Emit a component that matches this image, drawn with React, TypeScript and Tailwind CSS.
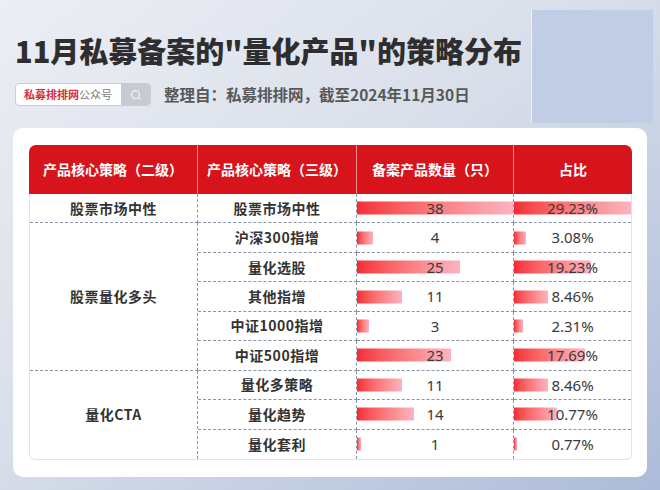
import React from "react";
import { Search } from "lucide-react";

type Item = { name: string; count: number; pct: number };
type Group = { group: string; items: Item[] };

const groups: Group[] = [
  { group: "股票市场中性", items: [{ name: "股票市场中性", count: 38, pct: 29.23 }] },
  {
    group: "股票量化多头",
    items: [
      { name: "沪深300指增", count: 4, pct: 3.08 },
      { name: "量化选股", count: 25, pct: 19.23 },
      { name: "其他指增", count: 11, pct: 8.46 },
      { name: "中证1000指增", count: 3, pct: 2.31 },
      { name: "中证500指增", count: 23, pct: 17.69 },
    ],
  },
  {
    group: "量化CTA",
    items: [
      { name: "量化多策略", count: 11, pct: 8.46 },
      { name: "量化趋势", count: 14, pct: 10.77 },
      { name: "量化套利", count: 1, pct: 0.77 },
    ],
  },
];

const maxCount = 38;
const maxPct = 29.23;
const spanClass: Record<number, string> = { 1: "row-span-1", 3: "row-span-3", 5: "row-span-5" };

const cjk = "font-['Noto_Sans_CJK_SC',sans-serif]";
const num = "font-['Noto_Sans','Noto_Sans_CJK_SC',sans-serif]";

// bar sits behind the value, width taken from data
function BarCell({ ratio, label, last, edge }: { ratio: number; label: string; last: boolean; edge: boolean }) {
  return (
    <div
      className={`relative flex items-center justify-center border-dashed border-[#8b94a6] ${last ? "" : "border-b"} ${edge ? "" : "border-r"}`}
    >
      <div
        className="absolute left-0 top-1/2 h-[13px] -translate-y-1/2 bg-linear-to-r from-[#f42a37] to-[#fab4c1]"
        style={{ width: `${ratio * 100}%` }}
      />
      <span className={`relative text-[15px] text-[#3a3a3a] ${num}`}>{label}</span>
    </div>
  );
}

export default function App() {
  const total = groups.reduce((n, g) => n + g.items.length, 0);
  let idx = 0;

  return (
    <div className={`w-[660px] h-[490px] overflow-hidden bg-linear-to-br from-[#eceef4] via-[#d9dfea] via-45% to-[#adbbd9] ${cjk}`}>
      {/* Title area */}
      <div className="flex h-[128px]">
        <div className="min-w-0 flex-1 pl-[15px] pt-[32px]">
          <h1 className="text-[29px] leading-[36px] font-black text-[#2e2e30] whitespace-nowrap">
            11月私募备案的"量化产品"的策略分布
          </h1>
          <div className="mt-[15px] flex items-center">
            <div className="flex h-[23px] w-[136px] overflow-hidden rounded-[4px] border border-[#c9cdd5] bg-white">
              <div className="flex flex-1 items-center pl-[8px] text-[11px] leading-none">
                <span className="font-bold text-[#d6303c]">私募排排网</span>
                <span className="text-[#7a7a7a]">公众号</span>
              </div>
              <div className="flex w-[29px] items-center justify-center bg-[#c6cad2]">
                <Search size={12} strokeWidth={2.5} className="text-[#f2f3f5]" />
              </div>
            </div>
            <span className="ml-[13px] text-[15.5px] font-bold text-[#585858] whitespace-nowrap">
              整理自：私募排排网，截至2024年11月30日
            </span>
          </div>
        </div>
        <div className="mr-[7px] mt-[10px] h-[113px] w-[122px] flex-none border-l border-white/70 bg-[#c1cde4]" />
      </div>

      {/* Card */}
      <div className="mx-[13px] h-[349px] rounded-[10px] bg-white pl-[16px] pr-[15px] pt-[17px]">
        <div className="grid h-[49px] grid-cols-[169px_159px_157px_118px] rounded-t-[7px] bg-[#d7131b] text-[14px] font-bold text-white">
          <div className="flex items-center justify-center border-r border-white/50">产品核心策略（二级）</div>
          <div className="flex items-center justify-center border-r border-white/50">产品核心策略（三级）</div>
          <div className="flex items-center justify-center border-r border-white/50">备案产品数量（只）</div>
          <div className="flex items-center justify-center">占比</div>
        </div>

        <div className="grid grid-cols-[168px_159px_157px_117px] auto-rows-[29.45px] overflow-hidden rounded-b-[6px] border border-t-0 border-[#e3e3e6]">
          {groups.map((g, gi) => {
            const lastGroup = gi === groups.length - 1;
            return (
              <React.Fragment key={g.group}>
                <div
                  className={`col-start-1 ${spanClass[g.items.length]} flex items-center justify-center border-r border-dashed border-[#8b94a6] text-[14px] font-bold tracking-[0.5px] text-[#333] ${lastGroup ? "" : "border-b"}`}
                >
                  {g.group}
                </div>
                {g.items.map((it) => {
                  idx += 1;
                  const last = idx === total;
                  return (
                    <React.Fragment key={it.name}>
                      <div
                        className={`col-start-2 flex items-center justify-center border-r border-dashed border-[#8b94a6] text-[14px] font-bold tracking-[0.5px] text-[#333] ${last ? "" : "border-b"}`}
                      >
                        {it.name}
                      </div>
                      <BarCell ratio={it.count / maxCount} label={String(it.count)} last={last} edge={false} />
                      <BarCell ratio={it.pct / maxPct} label={`${it.pct.toFixed(2)}%`} last={last} edge />
                    </React.Fragment>
                  );
                })}
              </React.Fragment>
            );
          })}
        </div>
      </div>
    </div>
  );
}
